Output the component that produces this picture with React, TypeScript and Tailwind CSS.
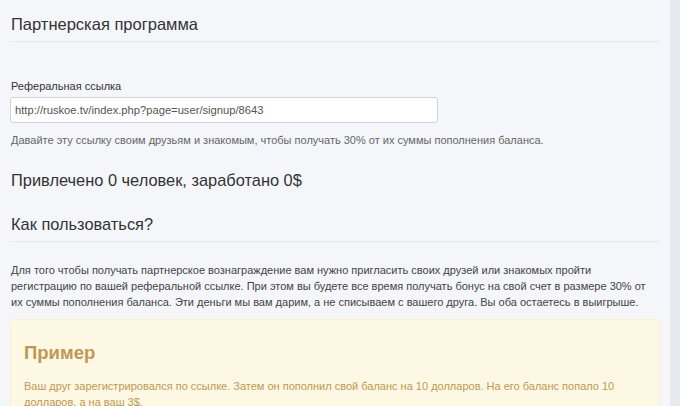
export default function App() {
  return (
    <div className="flex h-[406px] w-[699px] overflow-hidden bg-white font-['Liberation_Sans',Arial,sans-serif]">
      <div className="w-[670px] shrink-0 bg-[#f5f6fa] pl-[10px] pr-[10px]">
        <div className="border-b border-[#e6e8ee] pb-[5px] pt-[12px]">
          <h1 className="pl-[1px] text-[16.5px] leading-[24px] text-[#333]">Партнерская программа</h1>
        </div>

        <div className="pt-[37px]">
          <label className="block pl-[1px] text-[11px] leading-[14px] text-[#333]">Реферальная ссылка</label>
          <input
            readOnly
            value="http://ruskoe.tv/index.php?page=user/signup/8643"
            className="mt-[4px] block h-[26px] w-[428px] rounded-[3px] border border-[#cfd2d8] bg-white px-[4px] text-[11.2px] text-[#555] outline-none"
          />
          <p className="mt-[9px] pl-[1px] text-[11px] leading-[16px] text-[#666]">
            Давайте эту ссылку своим друзьям и знакомым, чтобы получать 30% от их суммы пополнения баланса.
          </p>
        </div>

        <h2 className="mt-[21px] pl-[1px] text-[16.4px] leading-[22px] text-[#333]">Привлечено 0 человек, заработано 0$</h2>

        <div className="mt-[22px] border-b border-[#e6e8ee] pb-[6px]">
          <h2 className="pl-[1px] text-[16.4px] leading-[22px] text-[#333]">Как пользоваться?</h2>
        </div>

        <p className="mt-[20px] pl-[1px] text-[11px] leading-[16px] text-[#444]">
          Для того чтобы получать партнерское вознаграждение вам нужно пригласить своих друзей или знакомых пройти
          <br />
          регистрацию по вашей реферальной ссылке. При этом вы будете все время получать бонус на свой счет в размере 30% от
          их суммы пополнения баланса. Эти деньги мы вам дарим, а не списываем с вашего друга. Вы оба остаетесь в выигрыше.
        </p>

        <div className="mt-[9px] rounded-[4px] border border-[#fbf1d6] bg-[#fdf8e4] px-[13px] pb-[20px] pt-[21px]">
          <h3 className="text-[18.5px] font-bold leading-[24px] text-[#c09853]">Пример</h3>
          <p className="mt-[13px] text-[11px] leading-[16px] text-[#c09853]">
            Ваш друг зарегистрировался по ссылке. Затем он пополнил свой баланс на 10 долларов. На его баланс попало 10
            <br />
            долларов, а на ваш 3$.
          </p>
        </div>
      </div>
      <div className="w-[10px] shrink-0 bg-[#e6e9ef]" />
      <div className="flex-1 bg-white" />
    </div>
  )
}
